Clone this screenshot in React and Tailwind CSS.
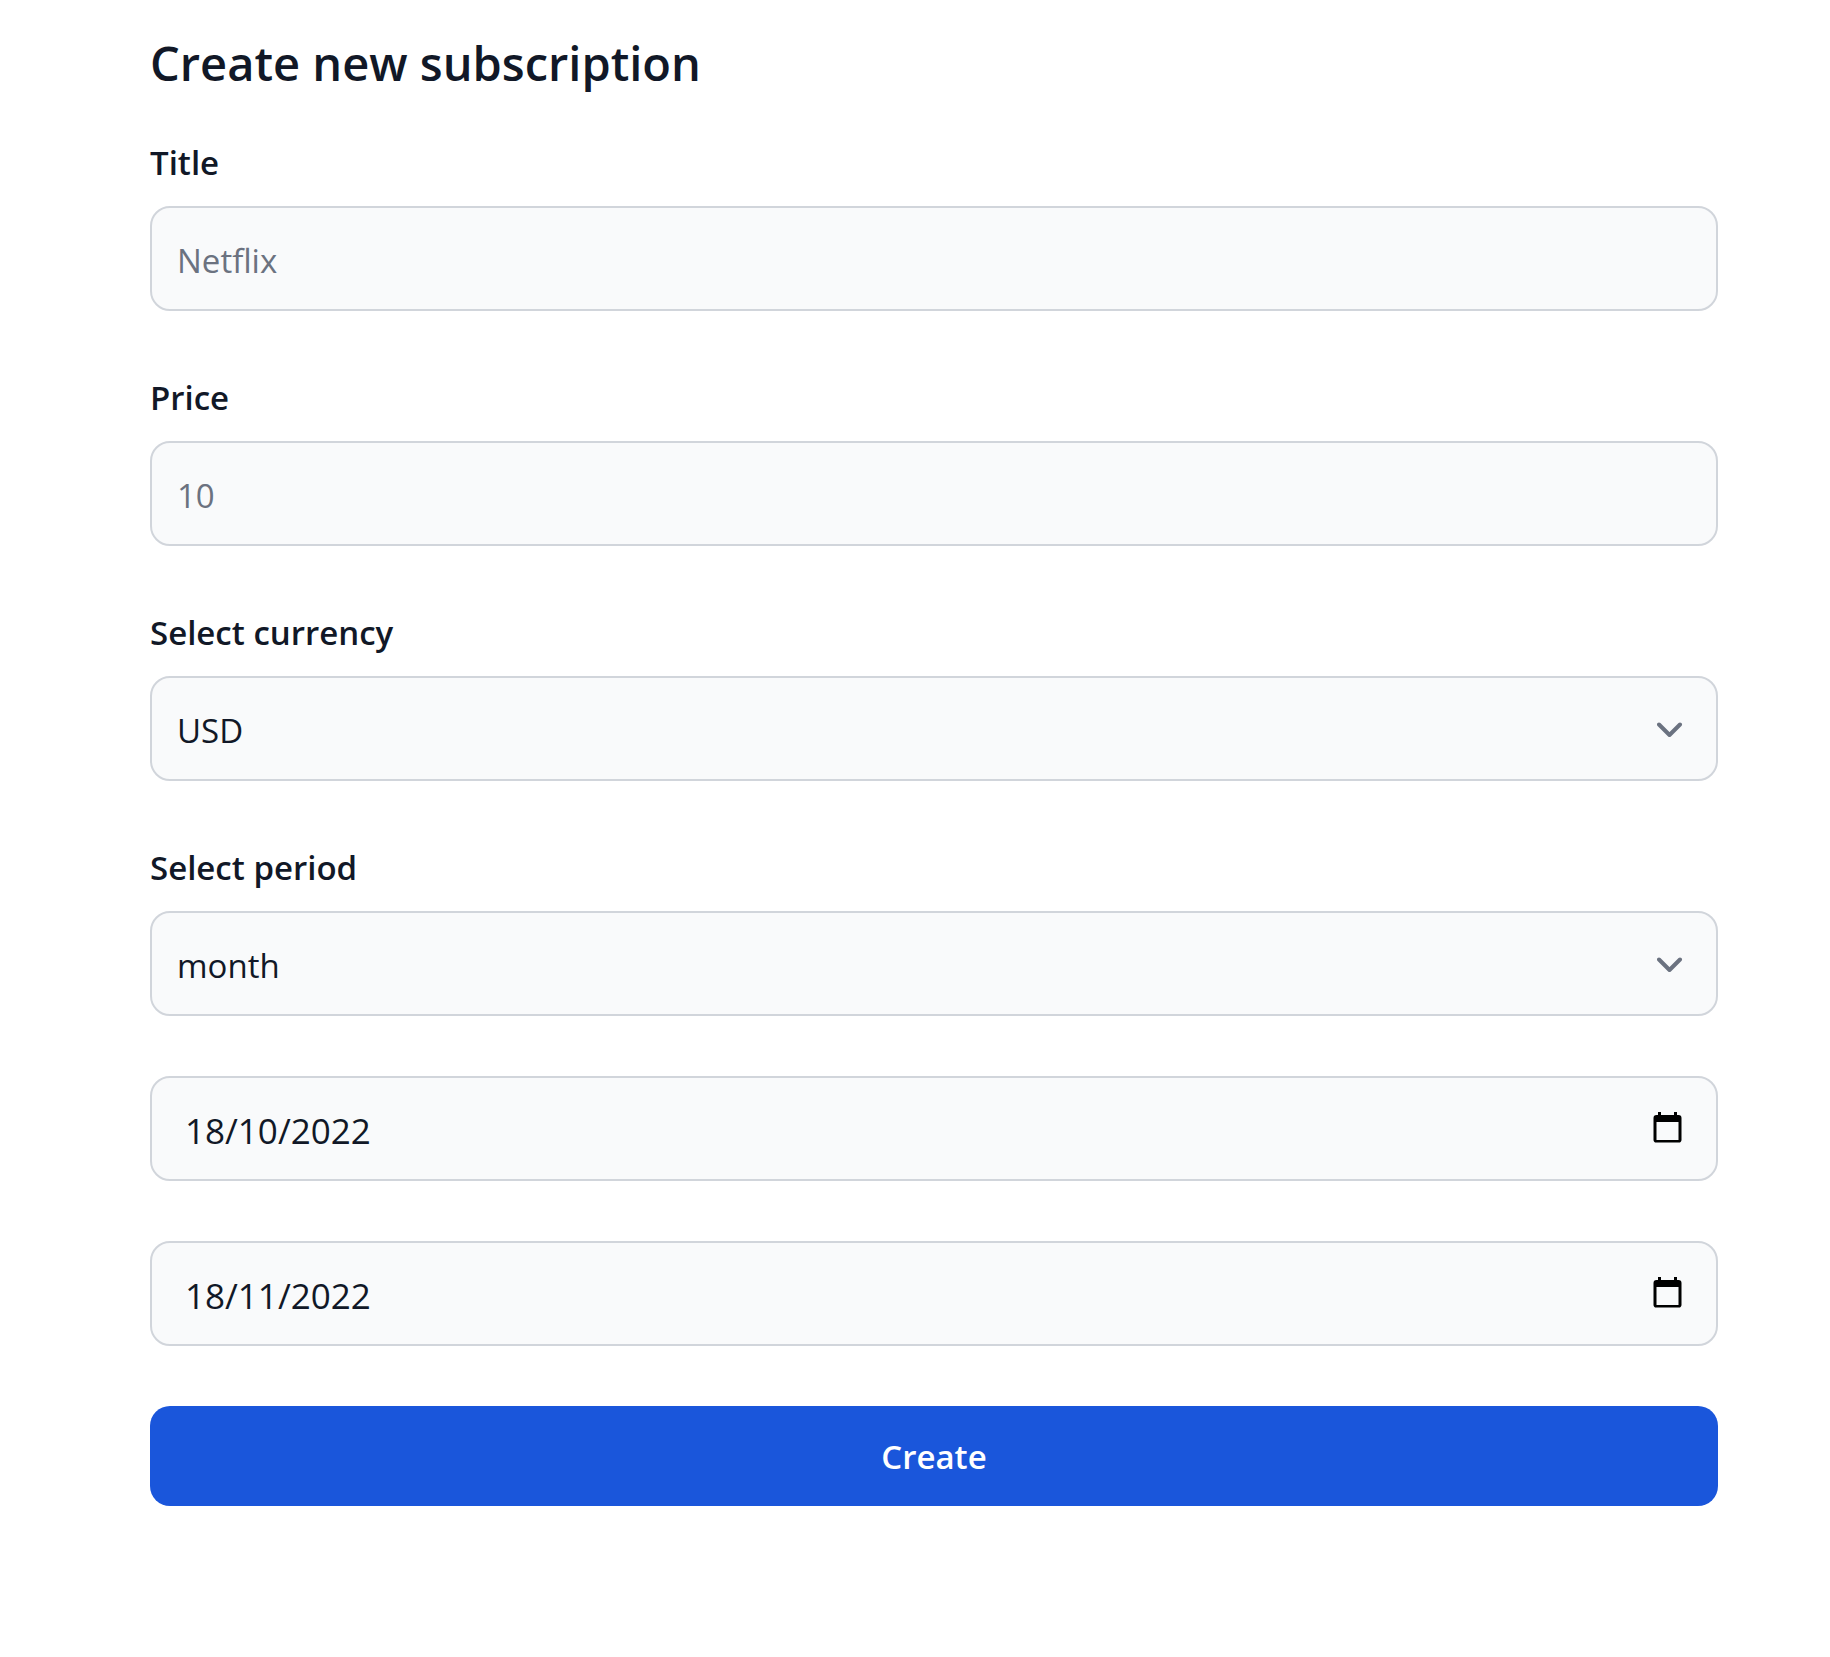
import { useState } from "react";

const control =
  "block h-[105px] w-full appearance-none rounded-[20px] border-2 border-[#d1d5db] bg-[#f9fafb] pt-1 leading-[50px] text-[#111827] placeholder:text-[#6b7280] placeholder:opacity-100 focus:outline-none focus:border-[#3f83f8]";

function Label({ htmlFor, children }) {
  return (
    <label htmlFor={htmlFor} className="mb-4 block text-[33px] font-semibold leading-[54px]">
      {children}
    </label>
  );
}

function TextField({ id, label, placeholder }) {
  return (
    <div>
      <Label htmlFor={id}>{label}</Label>
      <input id={id} type="text" placeholder={placeholder} className={`${control} px-[25px] text-[33px]`} />
    </div>
  );
}

function SelectField({ id, label, options }) {
  return (
    <div>
      <Label htmlFor={id}>{label}</Label>
      <div className="relative">
        <select id={id} className={`${control} pl-[25px] pr-[100px] text-[33px]`}>
          {options.map((option) => (
            <option key={option}>{option}</option>
          ))}
        </select>
        <svg
          viewBox="0 0 26 16"
          className="pointer-events-none absolute right-[35px] top-[46px] h-4 w-[26px]"
          fill="none"
          stroke="#6b7280"
          strokeWidth="4"
          strokeLinecap="round"
          strokeLinejoin="round"
          aria-hidden="true"
        >
          <path d="M2 2.500 12.500 13 23 2.500" />
        </svg>
      </div>
    </div>
  );
}

function DateField({ id, label, initial }) {
  const [value, setValue] = useState(initial);
  return (
    <div className="relative">
      <input
        id={id}
        type="text"
        aria-label={label}
        value={value}
        onChange={(event) => setValue(event.target.value)}
        className={`${control} pl-[33px] pr-[100px] text-[35px]`}
      />
      <button type="button" aria-label={`Pick ${label}`} className="absolute right-9 top-9 h-[31px] w-[29px]">
        <svg viewBox="0 0 29 31" className="block h-[31px] w-[29px]" aria-hidden="true">
          <path
            fill="#000"
            fillRule="evenodd"
            d="M5 0h3v3h13V0h3v3h1.500a3 3 0 0 1 3 3v22a2.500 2.500 0 0 1-3 2.500H3.500a2.500 2.500 0 0 1-3-2.500V6a3 3 0 0 1 3-3H5V0Zm-1.500 10v18h22V10h-22Z"
          />
        </svg>
      </button>
    </div>
  );
}

export default function App() {
  return (
    <main className="min-h-screen bg-white pb-[150px] pl-[150px] pr-28 pt-[26px] font-['Open_Sans','Noto_Sans',sans-serif] text-[#111827]">
      <h2 className="mb-9 text-[47px] font-semibold leading-[74px]">Create new subscription</h2>
      <form className="flex flex-col gap-[60px]" onSubmit={(event) => event.preventDefault()}>
        <TextField id="title" label="Title" placeholder="Netflix" />
        <TextField id="price" label="Price" placeholder="10" />
        <SelectField id="currency" label="Select currency" options={["USD", "EUR", "GBP"]} />
        <SelectField id="period" label="Select period" options={["month", "year", "week"]} />
        <DateField id="start" label="start date" initial="18/10/2022" />
        <DateField id="end" label="end date" initial="18/11/2022" />
        <button
          type="submit"
          className="h-[100px] w-full rounded-[20px] bg-[#1a56db] pt-0.5 text-[33px] font-semibold leading-[50px] text-white hover:bg-[#1e429f]"
        >
          Create
        </button>
      </form>
    </main>
  );
}
